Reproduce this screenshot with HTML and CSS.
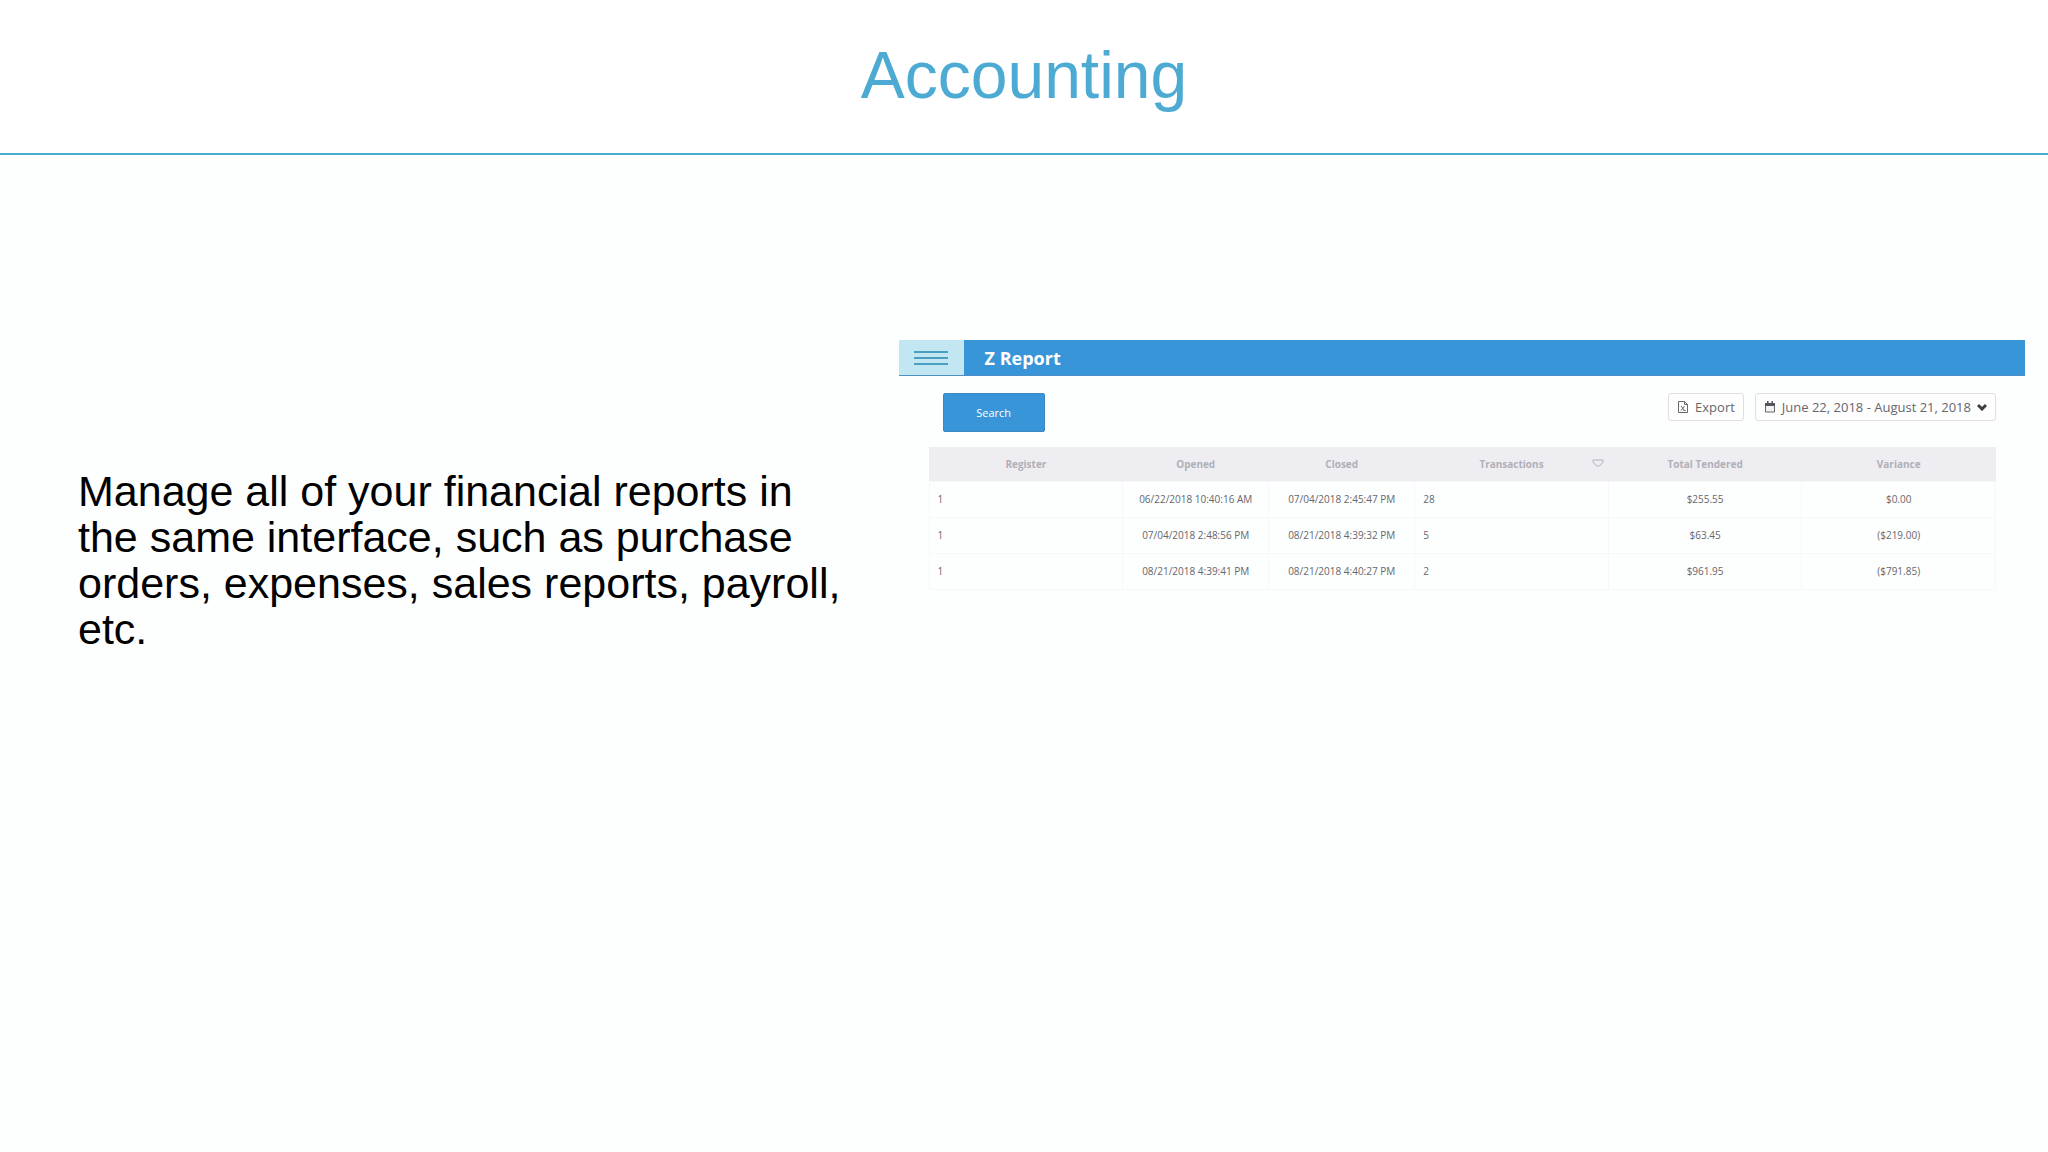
FILE: index.html
```html
<!DOCTYPE html>
<html lang="en">
	<head>
		<meta charset="UTF-8" />
		<meta name="viewport" content="width=device-width, initial-scale=1.0" />
		<title>Accounting</title>
		<link rel="stylesheet" href="styles.css">
	</head>
	<body>
		<header class="slide-header">
			<h1>Accounting</h1>
		</header>
		<main class="slide-body">
			<p class="copy">
				Manage all of your financial reports in the same interface, such as
				purchase orders, expenses, sales reports, payroll, etc.
			</p>
			<section class="report">
				<div class="report-bar">
					<button type="button" class="menu-button" aria-label="Menu">
						<svg width="34" height="16" viewBox="0 0 34 16">
							<path d="M0 2h34M0 8h34M0 14h34" stroke="#4a9fc0" stroke-width="2" />
						</svg>
					</button>
					<h2>Z Report</h2>
				</div>
				<div class="toolbar">
					<button type="button" class="search-button">Search</button>
					<div class="toolbar-right">
						<button type="button" class="tool-button">
							<svg width="12" height="12" viewBox="0 0 12 12" fill="none" stroke="#66666c">
								<path d="M1.500.5h6l3 3v8h-9zM7.500.5v3h3" />
								<path d="M4 5l3.500 4.500M7.500 5L4 9.500M6.500 9.500h2" />
							</svg>
							Export
						</button>
						<button type="button" class="tool-button" aria-haspopup="true">
							<svg width="12" height="12" viewBox="0 0 12 12">
								<path d="M1.500 2.500h9v8.500h-9z" fill="#f2f2f4" stroke="#66666c" />
								<path d="M1 2h10v3H1zM3 0h1.500v3H3zM7.500 0H9v3H7.500z" fill="#55555b" />
							</svg>
							<span class="date-range">June 22, 2018 - August 21, 2018</span>
							<svg width="10" height="8" viewBox="0 0 10 8">
								<path d="M1 2l4 4 4-4" fill="none" stroke="#3c3c42" stroke-width="3" />
							</svg>
						</button>
					</div>
				</div>
				<table class="report-table">
					<colgroup>
						<col>
						<col class="col-date">
						<col class="col-date">
						<col>
						<col>
						<col>
					</colgroup>
					<thead>
						<tr>
							<th>Register</th>
							<th>Opened</th>
							<th>Closed</th>
							<th>
								Transactions
								<svg class="filter-icon" width="12" height="8" viewBox="0 0 12 8">
									<path d="M1 1h10v2L7.500 7h-3L1 3z" fill="none" stroke="#b0b0b8" />
								</svg>
							</th>
							<th>Total Tendered</th>
							<th>Variance</th>
						</tr>
					</thead>
					<tbody>
						<tr>
							<td class="left">1</td>
							<td>06/22/2018 10:40:16 AM</td>
							<td>07/04/2018 2:45:47 PM</td>
							<td class="left">28</td>
							<td>$255.55</td>
							<td>$0.00</td>
						</tr>
						<tr>
							<td class="left">1</td>
							<td>07/04/2018 2:48:56 PM</td>
							<td>08/21/2018 4:39:32 PM</td>
							<td class="left">5</td>
							<td>$63.45</td>
							<td>($219.00)</td>
						</tr>
						<tr>
							<td class="left">1</td>
							<td>08/21/2018 4:39:41 PM</td>
							<td>08/21/2018 4:40:27 PM</td>
							<td class="left">2</td>
							<td>$961.95</td>
							<td>($791.85)</td>
						</tr>
					</tbody>
				</table>
			</section>
		</main>
	</body>
</html>
```
FILE: styles.css
```css
* {
	box-sizing: border-box;
}
body {
	margin: 0;
	font-family: "Liberation Sans", Arial, sans-serif;
	background-color: #fdfefe;
	color: #000;
}
h1,
h2,
p {
	margin: 0;
}
button {
	font-family: inherit;
	cursor: pointer;
}

.slide-header {
	padding: 37px 0 40px;
	background-color: #fff;
	border-bottom: 2px solid #4dabcf;
	text-align: center;
}
.slide-header h1 {
	font-size: 66px;
	line-height: 76px;
	font-weight: normal;
	color: #4dabd3;
}

.slide-body {
	display: flex;
	align-items: flex-start;
	padding: 185px 23px 0 78px;
}
.copy {
	flex: 1;
	padding: 128px 50px 0 0;
	font-size: 43px;
	line-height: 46px;
}

.report {
	width: 55vw;
	flex: none;
	font-family: "Open Sans", sans-serif;
	color: #66666c;
}
.report-bar {
	display: flex;
	align-items: center;
	height: 36px;
	background-color: #3896d8;
	border-bottom: 1px solid #4c8fc4;
}
.menu-button {
	display: flex;
	align-items: center;
	justify-content: center;
	width: 65px;
	height: 35px;
	padding: 0;
	border: none;
	background-color: #c3e6f3;
}
.report-bar h2 {
	margin-left: 21px;
	font-size: 18px;
	line-height: 24px;
	color: #fff;
}

.toolbar {
	display: flex;
	justify-content: space-between;
	align-items: flex-start;
	padding: 17px 29px 15px 44px;
}
.search-button {
	width: 102px;
	height: 39px;
	border: 1px solid #3c88c2;
	border-radius: 2px;
	background-color: #3896d8;
	font-size: 11px;
	color: #fff;
}
.toolbar-right {
	display: flex;
	gap: 11px;
}
.tool-button {
	display: flex;
	align-items: center;
	gap: 6px;
	height: 28px;
	padding: 0 8px;
	border: 1px solid #dfdfe4;
	border-radius: 3px;
	background-color: #fefeff;
	font-size: 13px;
	color: #66666c;
}

.report-table {
	width: calc(100% - 59px);
	margin-left: 30px;
	table-layout: fixed;
	border-collapse: collapse;
	font-size: 10px;
	line-height: 16px;
}
.col-date {
	width: 146px;
}
.report-table th {
	position: relative;
	height: 34px;
	padding: 0;
	background-color: #eeedf2;
	color: #b0b0b8;
}
.filter-icon {
	position: absolute;
	right: 4px;
	top: 12px;
}
.report-table td {
	height: 36px;
	padding: 0 8px;
	border: 1px solid #f7f6fa;
	text-align: center;
}
.report-table .left {
	text-align: left;
}
```
